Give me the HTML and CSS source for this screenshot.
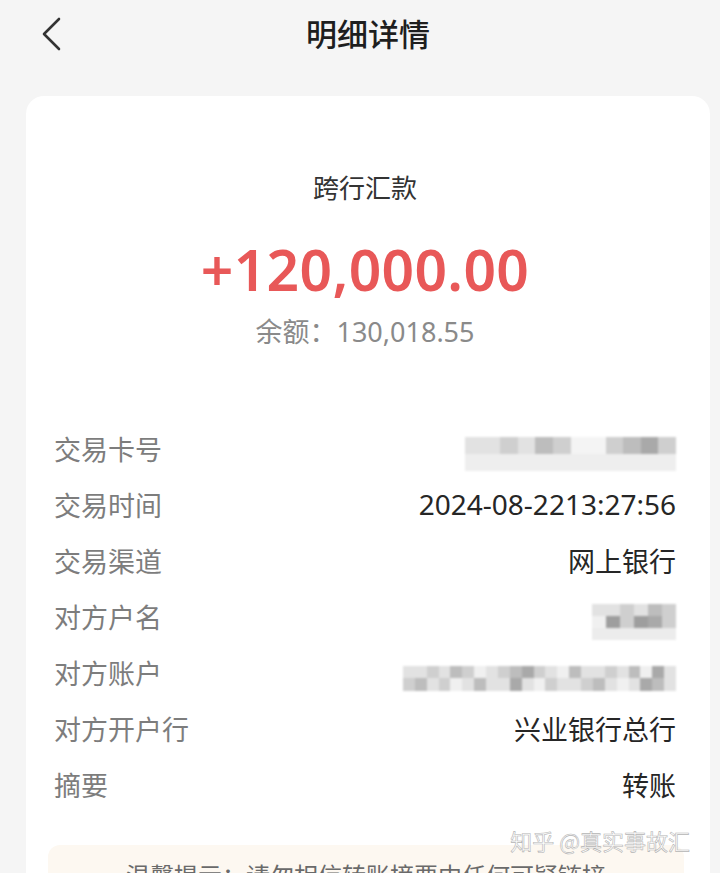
FILE: index.html
```html
<!DOCTYPE html>
<html lang="zh-CN">
<head>
  <meta charset="UTF-8">
  <meta name="viewport" content="width=device-width, initial-scale=1">
  <title>明细详情</title>
  <link rel="stylesheet" href="styles.css">
</head>
<body>
<header class="topbar">
  <span class="back">
    <svg width="22" height="34" viewBox="0 0 22 34"><path d="M19 2 L4 17 L19 32" fill="none" stroke="#333" stroke-width="2.6" stroke-linecap="round" stroke-linejoin="round"/></svg>
  </span>
  <h1>明细详情</h1>
</header>
<main class="card">
  <section class="summary">
    <div class="type">跨行汇款</div>
    <div class="amount">+120,000.00</div>
    <div class="balance">余额：130,018.55</div>
  </section>
  <ul class="rows">
    <li><span class="label">交易卡号</span><span class="mosaic card-no"><i></i><i></i><i></i><i></i><i></i><i></i><i></i><i></i><i></i><i></i><i></i><i></i><i></i><i></i><i></i><i></i><i></i><i></i><i></i><i></i><i></i><i></i><i></i><i></i></span></li>
    <li><span class="label">交易时间</span><span class="value time">2024-08-2213:27:56</span></li>
    <li><span class="label">交易渠道</span><span class="value">网上银行</span></li>
    <li><span class="label">对方户名</span><span class="mosaic name"><i></i><i></i><i></i><i></i><i></i><i></i><i></i><i></i><i></i><i></i><i></i><i></i><i></i><i></i><i></i><i></i><i></i><i></i></span></li>
    <li><span class="label">对方账户</span><span class="mosaic account"><i></i><i></i><i></i><i></i><i></i><i></i><i></i><i></i><i></i><i></i><i></i><i></i><i></i><i></i><i></i><i></i><i></i><i></i><i></i><i></i><i></i><i></i><i></i><i></i><i></i><i></i><i></i><i></i><i></i><i></i><i></i><i></i><i></i><i></i><i></i><i></i><i></i><i></i><i></i><i></i><i></i><i></i><i></i><i></i><i></i><i></i></span></li>
    <li><span class="label">对方开户行</span><span class="value">兴业银行总行</span></li>
    <li><span class="label">摘要</span><span class="value">转账</span></li>
  </ul>
  <div class="tip">温馨提示：请勿相信转账摘要中任何可疑链接</div>
  <div class="watermark">知乎 @真实事故汇</div>
</main>
</body>
</html>
```
FILE: styles.css
```css
* { box-sizing: border-box; margin: 0; padding: 0; }
html, body { height: 100%; overflow: hidden; }
body {
  background: #f5f5f5;
  font-family: "Noto Sans", "Noto Sans CJK SC", sans-serif;
  color: #222;
  padding: 0 10px 0 26px;
}
.topbar {
  position: relative;
  height: 96px;
  display: flex;
  justify-content: center;
  padding-top: 10px;
}
.topbar h1 {
  font-family: "Noto Sans CJK SC", sans-serif;
  font-size: 31px;
  font-weight: 500;
  line-height: 46px;
  color: #1e1e1e;
}
.back {
  position: absolute;
  left: 14px;
  top: 17px;
}
.card {
  position: relative;
  background: #fff;
  border-radius: 18px;
  height: 800px;
  padding: 0 34px 0 28px;
}
.summary {
  display: flex;
  flex-direction: column;
  align-items: center;
  padding-top: 72px;
}
.type {
  font-family: "Noto Sans CJK SC", sans-serif;
  font-size: 26px;
  line-height: 38px;
  color: #333;
}
.amount {
  margin-top: 28px;
  font-size: 57px;
  font-weight: 600;
  line-height: 70px;
  color: #e85858;
  letter-spacing: 0.3px;
}
.balance {
  margin-top: 11px;
  font-size: 27px;
  line-height: 34px;
  color: #8a8a8a;
}
.rows {
  list-style: none;
  margin-top: 71px;
}
.rows li {
  display: flex;
  justify-content: space-between;
  align-items: center;
  height: 56px;
}
.label {
  font-family: "Noto Sans CJK SC", sans-serif;
  font-size: 27px;
  color: #7d7d7d;
}
.value {
  font-size: 27px;
  color: #262626;
}
.value.time { font-size: 28px; }
.mosaic {
  display: grid;
  margin-top: 12px;
  filter: blur(0.8px);
}
.mosaic i { display: block; background: #e2e2e2; }
.mosaic i:nth-child(3n) { background: #cfcfcf; }
.mosaic i:nth-child(5n) { background: #bdbdbd; }
.mosaic i:nth-child(7n) { background: #f0f0f0; }
.mosaic i:nth-child(11n) { background: #a9a9a9; }
.card-no {
  width: 211px;
  height: 34px;
  grid-template-columns: repeat(12, 1fr);
  grid-template-rows: repeat(2, 1fr);
}
.card-no i:nth-child(n+13) { background: #eeeeee; }
.card-no i:nth-child(7), .card-no i:nth-child(8) { background: #f4f4f4; }
.name {
  width: 84px;
  height: 36px;
  grid-template-columns: repeat(6, 1fr);
  grid-template-rows: repeat(3, 1fr);
}
.name i:nth-child(8), .name i:nth-child(10) { background: #9e9e9e; }
.name i:nth-child(n+13) { background: #ececec; }
.account {
  width: 273px;
  height: 25px;
  grid-template-columns: repeat(23, 1fr);
  grid-template-rows: repeat(2, 1fr);
}
.tip {
  margin: 33px -8px 0 -6px;
  background: #fdf8f1;
  border-radius: 12px;
  padding: 12px 0;
  text-align: center;
  font-family: "Noto Sans CJK SC", sans-serif;
  font-size: 24px;
  color: #6a6a6a;
}
.watermark {
  position: absolute;
  right: 20px;
  top: 728px;
  font-family: "Noto Sans CJK SC", sans-serif;
  font-size: 22px;
  color: rgba(255, 255, 255, 0.85);
  -webkit-text-stroke: 0.6px #b4b4b4;
}
```
